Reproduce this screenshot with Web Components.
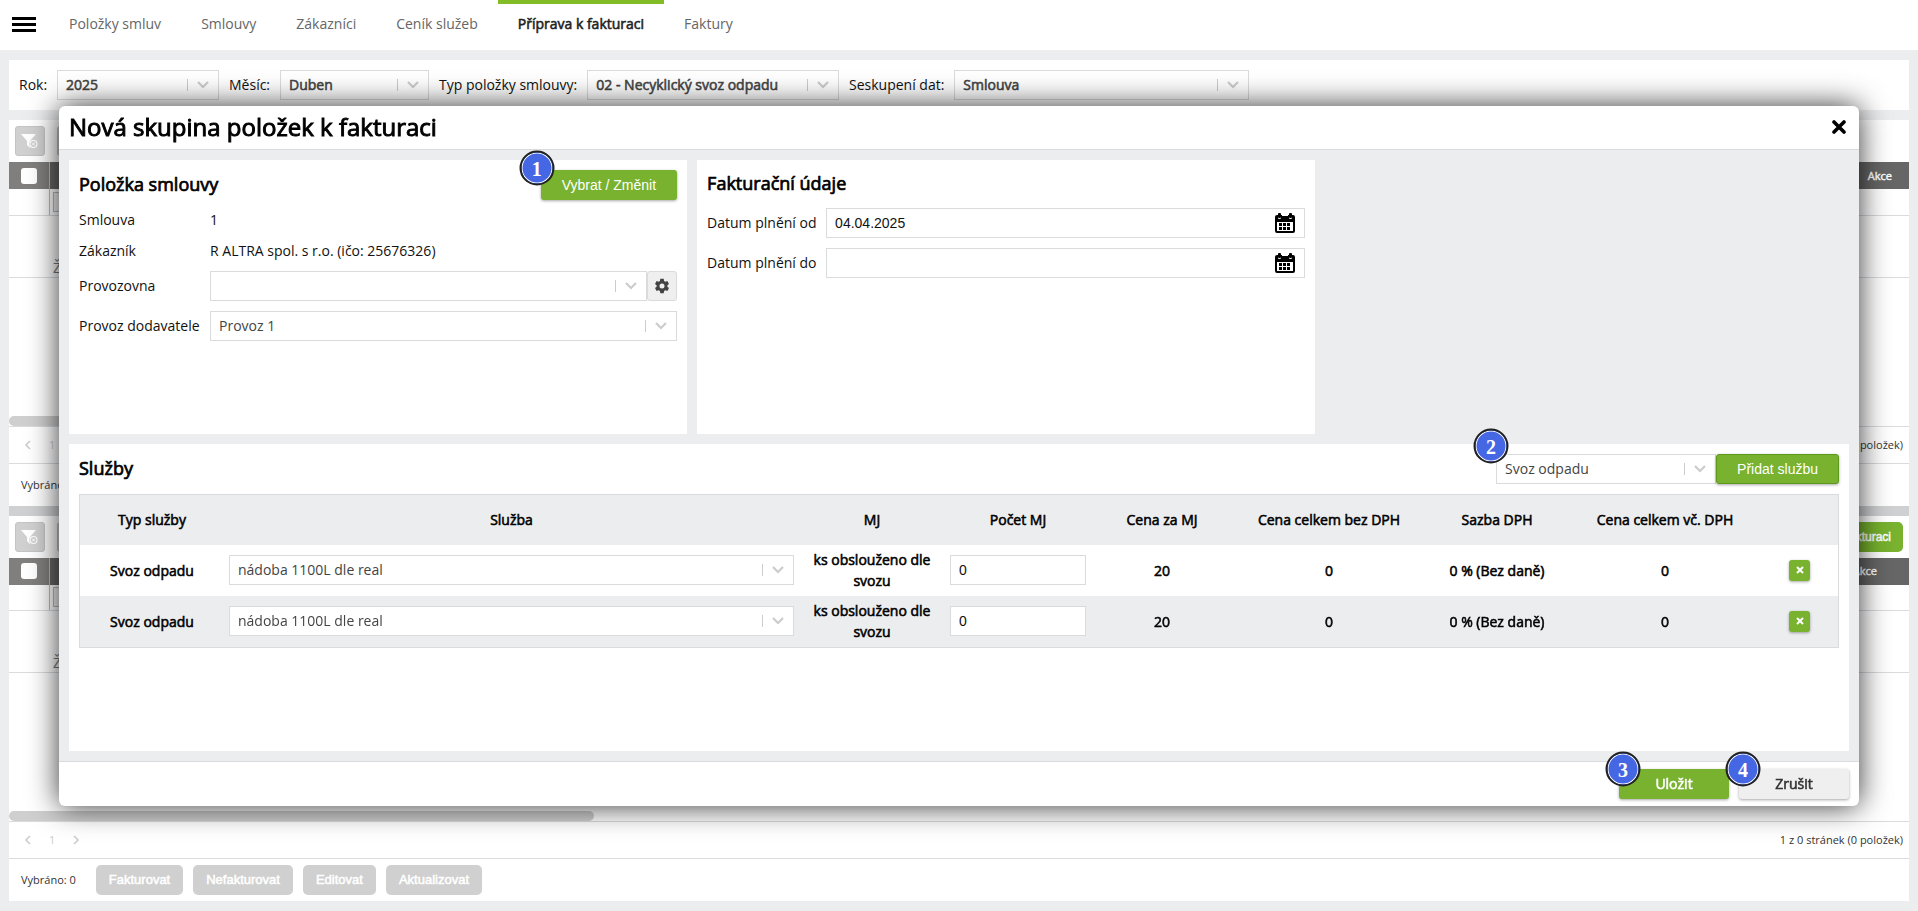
<!DOCTYPE html>
<html lang="cs">
<head>
<meta charset="utf-8">
<title>Příprava k fakturaci</title>
<style>
  html, body { height: 100%; }
  body {
    margin: 0;
    background: #ecedef;
    color: #111;
    font: 14px/20px "Open Sans", sans-serif;
    --green: #78b22f;
    --line: #dadbdd;
    --bold: 0.04em;
  }
</style>
</head>
<body>
<app-page></app-page>

<script>
const define = (name, render) => customElements.define(name, class extends HTMLElement {
  connectedCallback() {
    if (this.shadowRoot) return;
    this.attachShadow({ mode: "open" }).innerHTML =
      `<style>*{box-sizing:border-box}</style>` + render(this);
  }
});

/* Icons */
const iconPaths = {
  menu: `<svg width="24" height="16" viewBox="0 0 24 16"><path d="M0 0h24v3H0zM0 6h24v3H0zM0 12h24v3H0z" fill="#000"/></svg>`,
  chevron: `<svg width="12" height="8" viewBox="0 0 12 8"><path d="M1 1l5 5 5-5" fill="none" stroke="#ccc" stroke-width="2.2"/></svg>`,
  left: `<svg width="7" height="10" viewBox="0 0 7 10"><path d="M6 1L2 5l4 4" fill="none" stroke="#ccc" stroke-width="1.6"/></svg>`,
  right: `<svg width="7" height="10" viewBox="0 0 7 10"><path d="M1 1l4 4-4 4" fill="none" stroke="#ccc" stroke-width="1.6"/></svg>`,
  close: `<svg width="14" height="14" viewBox="0 0 14 14"><path d="M2 2l10 10M12 2L2 12" stroke="#000" stroke-width="3.6" stroke-linecap="round"/></svg>`,
  remove: `<svg width="8" height="8" viewBox="0 0 8 8"><path d="M1 1l6 6M7 1L1 7" stroke="#fff" stroke-width="2"/></svg>`,
  funnel: `<svg width="18" height="16" viewBox="0 0 18 16"><path d="M0 1h15L9 8v7L6 12V8z" fill="#fff"/><circle cx="12.5" cy="11" r="4.5" fill="#d0d0d0"/><circle cx="12.5" cy="11" r="3.5" fill="#d0d0d0" stroke="#fff" stroke-width="1.1"/><path d="M11 9.5l3 3M14 9.5l-3 3" stroke="#fff"/></svg>`,
  gear: `<svg width="14" height="16" viewBox="0 0 14 16"><path fill="#444" fill-rule="evenodd" d="M5.3.8h3.4l.4 2.100 1.300.8 2-.7L14 5.900l-1.600 1.400v1.400L14 10.100l-1.600 2.900-2-.7-1.300.8-.4 2.100H5.300l-.4-2.100-1.300-.8-2 .7L0 10.100l1.600-1.400V7.300L0 5.900 1.600 3l2 .7 1.300-.8zM7 5.500a2.500 2.500 0 100 5 2.500 2.500 0 000-5z"/></svg>`,
  calendar: `<svg width="20" height="20" viewBox="0 0 20 20"><path fill="#000" fill-rule="evenodd" d="M2 2h1v3q0 1 1.500 1T6 5V2h8v3q0 1 1.500 1T17 5V2h1q2 0 2 2v14q0 2-2 2H2q-2 0-2-2V4q0-2 2-2zM2 9v9h16V9z"/><path d="M7 0h6v3H7z" fill="#fff"/><rect x="3" width="3" height="5" rx="1"/><rect x="14" width="3" height="5" rx="1"/><path d="M4 10h3v3H4zM8 10h3v3H8zM12 10h3v3h-3zM4 14h3v3H4zM8 14h3v3H8zM12 14h3v3h-3z"/></svg>`
};
define("app-icon", el => `<style>:host{display:inline-flex;align-items:center;justify-content:center}svg{display:block}</style>${iconPaths[el.getAttribute("name")]}`);

/* Numbered step marker pinned to the corner of the control it explains */
define("step-badge", () => `<style>
  :host{position:absolute;z-index:2;top:0;left:0;transform:translate(-50%,-50%);width:35px;height:35px;box-sizing:border-box;border-radius:50%;
    border:2px solid #222;background:#4667e3;box-shadow:inset 0 0 0 1px #fff;color:#fff;
    display:flex;align-items:center;justify-content:center;font:bold 20px/20px "Liberation Serif",serif;-webkit-text-stroke:0;pointer-events:none}
</style><slot></slot>`);

/* Button: green, light, or muted */
define("app-button", el => `<style>
  :host{display:block;position:relative}
  button{height:30px;width:100%;border:0;border-radius:3px;padding:0 21px;font:14px/20px "Liberation Sans",sans-serif;white-space:nowrap;
    color:#fff;background:var(--green);box-shadow:0 1px 3px rgba(0,0,0,.35);display:flex;align-items:center;justify-content:center}
  :host([kind=wide]) button,:host([kind=light]) button{font-family:"Open Sans",sans-serif;-webkit-text-stroke:var(--bold);width:110px}
  :host([kind=light]) button{background:#efefef;color:#333}
  :host([kind=outlined]) button{border:1px solid #5d9a1c;padding:0 20px}
  :host([kind=muted]) button{background:#d0d0d0;border-radius:5px;box-shadow:none;padding:0 13px;font-size:13px;-webkit-text-stroke:var(--bold)}
  :host([kind=small]) button{border-radius:5px;box-shadow:none;padding:0 12px;font-size:12px;-webkit-text-stroke:var(--bold)}
  :host([kind=delete]) button{width:21px;height:21px;padding:0;margin:auto}
  :host([kind=gear]) button{width:30px;padding:0;background:#efefef;border:1px solid var(--line);box-shadow:none}
  :host([kind=funnel]) button{width:30px;padding:0;background:#d0d0d0;border:1px solid #c4c4c4;box-shadow:none}
</style><button type="button" aria-label="${el.getAttribute("label") || el.firstChild.textContent.trim()}"><slot></slot></button><slot name="badge"></slot>`);

/* Drop-down with optional caption */
define("app-select", el => {
  const label = el.getAttribute("label"), value = el.getAttribute("value") || "";
  return `<style>
  :host{display:flex;align-items:center;position:relative}
  label{flex:none;width:var(--label-width,auto);margin-right:10px;white-space:nowrap}
  .box{position:relative;flex:1;min-width:0;height:30px}
  select{appearance:none;display:block;width:100%;height:30px;margin:0;padding:0 40px 0 8px;border:1px solid var(--line);border-radius:0;background:var(--select-bg,#fff);
    font:14px/20px "Open Sans",sans-serif;color:#444;-webkit-text-stroke:var(--select-stroke,0)}
  .arrow{position:absolute;right:0;top:9px;width:32px;height:12px;padding-right:2px;border-left:1px solid #ccc;pointer-events:none}
  </style>${label ? `<label for="s">${label}</label>` : ""}<div class="box"><select id="s" ${label ? "" : `aria-label="${el.getAttribute("hint")}"`}><option>${value}</option></select><app-icon class="arrow" name="chevron"></app-icon></div><slot></slot>`;
});

/* Date box with caption */
define("date-field", el => `<style>
  :host{display:flex;align-items:center}
  label{flex:none;width:119px;white-space:nowrap}
  .box{flex:1;min-width:0;height:30px;display:flex;align-items:center;border:1px solid var(--line);padding-right:9px}
  input{flex:1;min-width:0;border:0;outline:0;background:none;padding:0 8px;font:14px/20px "Liberation Sans",sans-serif;color:#111}
</style><label for="d">${el.getAttribute("label")}</label><div class="box"><input id="d" type="text" value="${el.getAttribute("value") || ""}"><app-icon name="calendar"></app-icon></div>`);

define("top-nav", () => `<style>
  :host{display:flex;height:50px;flex:none;background:#fff;padding-left:12px}
  button{border:0;background:none;padding:0;display:flex;align-items:center;margin-right:13px}
  nav{display:flex}
  a{display:flex;align-items:center;padding:0 20px 6px;border-top:4px solid transparent;color:#666;text-decoration:none;white-space:nowrap}
  a[aria-current]{color:#222;border-top-color:#82bd28;-webkit-text-stroke:var(--bold)}
</style><button aria-label="Menu"><app-icon name="menu"></app-icon></button>
<nav><a href="#">Položky smluv</a><a href="#">Smlouvy</a><a href="#">Zákazníci</a><a href="#">Ceník služeb</a><a href="#" aria-current="page">Příprava k fakturaci</a><a href="#">Faktury</a></nav>`);

define("filter-bar", () => `<style>
  :host{display:flex;gap:10px;align-items:center;height:50px;flex:none;background:#fff;padding:0 10px;white-space:nowrap;--select-bg:transparent;--select-stroke:var(--bold)}
  .short{width:200px}.long{width:400px}
</style><app-select class="short" label="Rok:" value="2025"></app-select><app-select class="short" label="Měsíc:" value="Duben"></app-select><app-select class="long" label="Typ položky smlouvy:" value="02 - Necyklický svoz odpadu"></app-select><app-select class="long" label="Seskupení dat:" value="Smlouva"></app-select>`);

/* Data grid behind the dialog */
define("grid-panel", el => `<style>
  :host{display:flex;flex-direction:column;flex:1;min-height:0;background:#fff;font-size:11px;color:#333}
  .tools{display:flex;gap:12px;padding:6px;height:42px;flex:none}
  .scroll{flex:1;min-height:0}
  table{width:100%;border-collapse:collapse;table-layout:fixed}
  th{height:27px;padding:0 17px 0 0;background:#666;color:#fff;font-weight:400;text-align:right;-webkit-text-stroke:var(--bold)}
  :host([scrolled]) th{padding-right:32px}
  th.check,:host([scrolled]) th.check{width:40px;background:#807f7d;padding:0}
  .check{border-right:1px solid #bbb}
  input{appearance:none;display:block;background:#fff;margin:auto}
  input[type=checkbox]{width:16px;height:16px;border-radius:3px}
  input[type=text]{width:120px;height:20px;border:1px solid #bbb;margin:0 0 0 3px;background:#f2f2f2}
  td{border-bottom:1px solid var(--line);padding:0;height:26px}
  td.empty{height:62px;vertical-align:bottom;padding:0 0 0 44px;font-size:14px;line-height:18px;color:#777}
  .bar{height:10px;flex:none;border-radius:5px;background:#cfcfcf;width:585px}
  .pager{height:38px;flex:none;border-top:1px solid var(--line);border-bottom:1px solid var(--line);display:flex;align-items:center;gap:18px;padding:0 6px 0 15px}
  .pager b{font-weight:400;color:#ccc}
  .pager button{border:0;background:none;padding:0;display:flex}
  .pager .count{margin-left:auto}
  footer{height:42px;flex:none;display:flex;align-items:center;gap:10px;padding:0 12px}
  footer span{margin-right:10px}
</style>
<div class="tools"><app-button kind="funnel" label="Zrušit filtr"><app-icon name="funnel"></app-icon></app-button><app-button kind="funnel" label="Filtr"></app-button><slot></slot></div>
<div class="scroll"><table><tr><th class="check"><input type="checkbox" aria-label="Vybrat vše"></th><th>Akce</th></tr>
<tr><td class="check"></td><td><input type="text" aria-label="Filtr"></td></tr><tr><td class="empty" colspan="2">Žádná data</td></tr></table></div>
<div class="bar"></div>
<div class="pager"><button aria-label="Předchozí"><app-icon name="left"></app-icon></button><b>1</b><button aria-label="Další"><app-icon name="right"></app-icon></button><span class="count">1 z 0 stránek (0 položek)</span></div>
<footer><span>Vybráno: 0</span>${el.hasAttribute("scrolled") ? `<app-button kind="muted">Fakturovat</app-button><app-button kind="muted">Nefakturovat</app-button><app-button kind="muted">Editovat</app-button><app-button kind="muted">Aktualizovat</app-button>` : ""}</footer>`);

define("content-card", el => `<style>
  :host{display:block;background:#fff;padding:10px;box-sizing:border-box}
  header{display:flex;align-items:center;height:var(--head,30px)}
  h2{margin:0 auto 0 0;padding-bottom:2px;font:400 18px/24px "Open Sans",sans-serif;-webkit-text-stroke:var(--bold);color:#000}
</style><header><h2>${el.getAttribute("heading")}</h2><slot name="action"></slot></header><slot></slot>`);

const row = () => `<tr><td>Svoz odpadu</td><td><app-select hint="Služba" value="nádoba 1100L dle real"></app-select></td><td>ks obslouženo dle svozu</td>
<td><input type="text" value="0" aria-label="Počet MJ"></td><td>20</td><td>0</td><td>0 % (Bez daně)</td><td>0</td><td><app-button kind="delete" label="Odebrat"><app-icon name="remove"></app-icon></app-button></td></tr>`;
define("services-table", () => `<style>
  :host{display:block;margin-top:10px;border:1px solid var(--line);color:#000}
  table{width:100%;table-layout:fixed;border-collapse:collapse;text-align:center}
  th,td{height:51px;padding:0 5px;font-weight:400;line-height:21px;-webkit-text-stroke:var(--bold)}
  th{height:50px;padding-bottom:1px}
  td{padding-bottom:1px}
  thead,tbody tr:nth-child(2){background:#ecedef}
  app-select,app-button,input{-webkit-text-stroke:0}
  app-select{text-align:left}
  input{display:block;width:100%;height:30px;border:1px solid var(--line);padding:0 8px;font:14px/20px "Liberation Sans",sans-serif;color:#111}
  .typ,.vat,.price{width:144px}.mj,.count{width:146px}.price{width:142px}.total{width:192px}.del{width:77px}
</style><table><colgroup><col class="typ"><col><col class="mj"><col class="count"><col class="price"><col class="total"><col class="vat"><col class="total"><col class="del"></colgroup>
<thead><tr><th>Typ služby</th><th>Služba</th><th>MJ</th><th>Počet MJ</th><th>Cena za MJ</th><th>Cena celkem bez DPH</th><th>Sazba DPH</th><th>Cena celkem vč. DPH</th><th></th></tr></thead>
<tbody>${row()}${row()}</tbody></table>`);

define("item-dialog", () => `<style>
  :host{position:fixed;inset:106px 59px 105px;display:flex;flex-direction:column;background:#fff;border-radius:6px;box-shadow:0 0 30px rgba(0,0,0,.8)}
  .head{height:44px;flex:none;display:flex;align-items:center;justify-content:space-between;padding:0 13px 2px 10px;border-bottom:1px solid var(--line);border-radius:6px 6px 0 0}
  h1{margin:0;font:400 24px/32px "Open Sans",sans-serif;-webkit-text-stroke:var(--bold);color:#000}
  .head button{border:0;background:none;padding:0;display:flex}
  .body{flex:1;min-height:0;display:flex;flex-direction:column;gap:10px;padding:10px;background:#ecedef}
  .cards{display:grid;grid-template-columns:59fr 59fr 50fr;gap:10px}
  .cards content-card{min-height:274px}
  .services{flex:1;min-height:0}
  .rows{display:flex;flex-direction:column;gap:10px;--label-width:121px}
  dl{margin:10px 0;display:grid;grid-template-columns:121px 1fr;column-gap:10px;row-gap:11px}
  dt,dd{margin:0}
  .dates{display:flex;flex-direction:column;gap:10px;margin-top:10px}
  .bill{--head:28px}
  .add{display:flex;position:relative}
  .add app-select{width:220px}
  .foot{height:45px;flex:none;display:flex;align-items:center;justify-content:flex-end;gap:10px;padding:0 10px;border-top:1px solid var(--line)}
  .cards step-badge{left:-4px;top:-2px}
  .add step-badge{left:-5px;top:-8px}
  .foot step-badge{left:4px}
</style>
<div class="head"><h1>Nová skupina položek k fakturaci</h1><button aria-label="Zavřít"><app-icon name="close"></app-icon></button></div>
<div class="body">
  <div class="cards">
    <content-card heading="Položka smlouvy">
      <app-button slot="action">Vybrat / Změnit<step-badge slot="badge">1</step-badge></app-button>
      <dl><dt>Smlouva</dt><dd>1</dd><dt>Zákazník</dt><dd>R ALTRA spol. s r.o. (ičo: 25676326)</dd></dl>
      <div class="rows"><app-select label="Provozovna"><app-button kind="gear" label="Nastavení"><app-icon name="gear"></app-icon></app-button></app-select>
      <app-select label="Provoz dodavatele" value="Provoz 1"></app-select></div>
    </content-card>
    <content-card class="bill" heading="Fakturační údaje">
      <div class="dates"><date-field label="Datum plnění od" value="04.04.2025"></date-field><date-field label="Datum plnění do"></date-field></div>
    </content-card>
  </div>
  <content-card class="services" heading="Služby">
    <div slot="action" class="add"><app-select hint="Typ služby" value="Svoz odpadu"></app-select><app-button kind="outlined">Přidat službu</app-button><step-badge>2</step-badge></div>
    <services-table></services-table>
  </content-card>
</div>
<div class="foot"><app-button kind="wide">Uložit<step-badge slot="badge">3</step-badge></app-button><app-button kind="light">Zrušit<step-badge slot="badge">4</step-badge></app-button></div>`);

define("app-page", () => `<style>
  :host{display:flex;flex-direction:column;height:100%}
  main{flex:1;min-height:0;display:flex;flex-direction:column;padding:10px 9px}
  filter-bar{margin-bottom:10px}
  .split{height:10px;flex:none;background:#cfd0d2}
  .end{margin-left:auto}
</style><top-nav></top-nav><main><filter-bar></filter-bar><grid-panel></grid-panel><div class="split"></div>
<grid-panel scrolled><app-button class="end" kind="small">Nová skupina k fakturaci</app-button></grid-panel></main><item-dialog></item-dialog>`);
</script>
</body>
</html>
